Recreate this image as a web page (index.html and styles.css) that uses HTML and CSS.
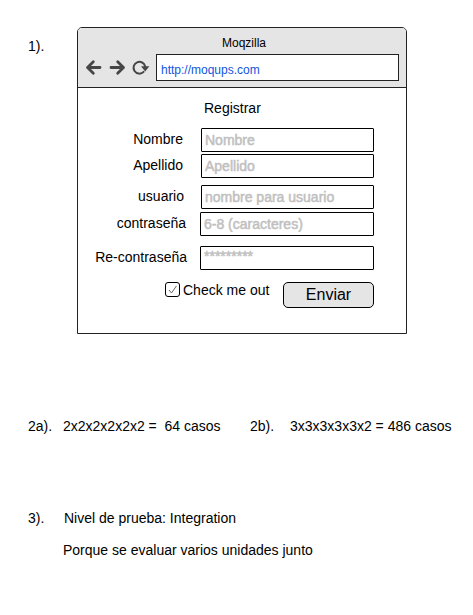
FILE: index.html
```html
<!DOCTYPE html>
<html lang="es">
<head>
<meta charset="utf-8">
<title>Moqzilla</title>
<link rel="stylesheet" href="styles.css">
</head>
<body>
<section class="exercise">
  <span class="number">1).</span>
  <div class="browser">
    <header class="chrome">
      <div class="title">Moqzilla</div>
      <div class="toolbar">
        <svg class="nav-icons" width="70" height="20" viewBox="0 0 70 20" fill="none" stroke="#464646" stroke-width="2.8" stroke-linecap="round" stroke-linejoin="round">
          <path d="M16 9.5H4M9.3 3.8L3.5 9.5l5.8 5.7"/>
          <path d="M27 9.5H39M33.7 3.8l5.8 5.7-5.8 5.7"/>
          <path stroke-width="2" d="M59.6 13.9A5.9 5.9 0 1 1 61.2 8.5"/>
          <path fill="#464646" stroke="none" d="M57 8.2h8.4L61.2 13.4z"/>
        </svg>
        <div class="address">http://moqups.com</div>
      </div>
    </header>
    <form class="form">
      <h1 class="heading">Registrar</h1>
      <div class="row"><label class="label" for="nombre">Nombre</label><input class="field" id="nombre" placeholder="Nombre"></div>
      <div class="row surname"><label class="label" for="apellido">Apellido</label><input class="field" id="apellido" placeholder="Apellido"></div>
      <div class="row user"><label class="label" for="usuario">usuario</label><input class="field" id="usuario" placeholder="nombre para usuario"></div>
      <div class="row password"><label class="label" for="clave">contraseña</label><input class="field" id="clave" placeholder="6-8 (caracteres)"></div>
      <div class="row repeat"><label class="label" for="reclave">Re-contraseña</label><input class="field" id="reclave" placeholder="*********"></div>
      <div class="actions">
        <span class="checkbox"><svg width="13" height="13" viewBox="0 0 13 13" fill="none" stroke="#666" stroke-width="1"><path d="M3 7l2.5 3L10.5 2.8"/></svg></span>
        <span class="check-label">Check me out</span>
        <button class="submit" type="button">Enviar</button>
      </div>
    </form>
  </div>
</section>
<section class="answers">
  <span class="number">2a).</span>
  <span class="first">2x2x2x2x2x2 =&nbsp; 64 casos</span>
  <span class="second-number">2b).</span>
  <span class="second">3x3x3x3x3x2 = 486 casos</span>
</section>
<section class="level">
  <span class="number">3).</span>
  <div class="explanation">
    <p class="line">Nivel de prueba: Integration</p>
    <p class="line reason">Porque se evaluar varios unidades junto</p>
  </div>
</section>
</body>
</html>
```
FILE: styles.css
```css
* { box-sizing: border-box; }
body {
  margin: 0;
  padding: 27px 0 0 28px;
  background: #fff;
  color: #000;
  font: 14px/16px "Liberation Sans", Arial, sans-serif;
  white-space: nowrap;
}
.exercise { display: flex; }
.exercise .number { width: 49px; padding-top: 11px; }
.browser {
  width: 330px;
  height: 307px;
  border: 1px solid #222;
  border-radius: 5px 5px 0 0;
  overflow: hidden;
}
.chrome { height: 60px; background: #e5e5e5; border-bottom: 1px solid #222; }
.title { padding: 8px 0 0 4px; font-size: 12px; line-height: 14px; text-align: center; }
.toolbar { display: flex; align-items: center; margin-top: 4px; }
.nav-icons { flex: none; margin-left: 6px; }
.address {
  width: 243px;
  height: 27px;
  margin-left: 2px;
  padding: 3px 0 0 4px;
  border: 1px solid #222;
  background: #fff;
  color: #1155dd;
  font-size: 12px;
  line-height: 24px;
}
.form { display: flex; flex-direction: column; }
.heading { margin: 12px 0 12px 126px; font-size: 14px; font-weight: 400; line-height: 16px; }
.row { display: flex; justify-content: space-between; width: 296px; }
.label { width: 105px; line-height: 22px; text-align: right; }
.field {
  width: 173px;
  height: 24px;
  padding: 0 0 1px 3px;
  border: 1px solid #000;
  border-radius: 1px;
  outline: 0;
  background: #fff;
  font: 14px/16px "Liberation Sans", Arial, sans-serif;
}
.field::placeholder { color: #c0c0c0; opacity: 1; -webkit-text-stroke: 0.5px #c0c0c0; }
.surname { margin-top: 2px; }
.user { margin-top: 7px; }
.user .label { width: 106px; }
.password { margin-top: 3px; }
.repeat { margin-top: 10px; }
.password .label { width: 108px; }
.repeat .label { width: 109px; }
.password .field, .repeat .field { width: 174px; }
.repeat .field { padding-bottom: 4px; }
.actions { display: flex; align-items: flex-start; margin: 12px 0 0 87px; }
.checkbox { width: 15px; height: 15px; border: 1px solid #000; border-radius: 3px; }
.checkbox svg { display: block; }
.check-label { width: 100px; margin-left: 3px; }
.submit {
  width: 91px;
  height: 26px;
  padding: 0;
  border: 1px solid #000;
  border-radius: 5px;
  background: #e5e5e5;
  color: #000;
  font: 16px/22px "Liberation Sans", Arial, sans-serif;
}
.answers { display: flex; margin-top: 84px; }
.answers .number { width: 35px; }
.first { width: 187px; }
.second-number { width: 40px; }
.level { display: flex; margin-top: 76px; }
.level .number { width: 36px; }
.line { margin: 0; }
.reason { margin: 16px 0 0 -1px; }
```
